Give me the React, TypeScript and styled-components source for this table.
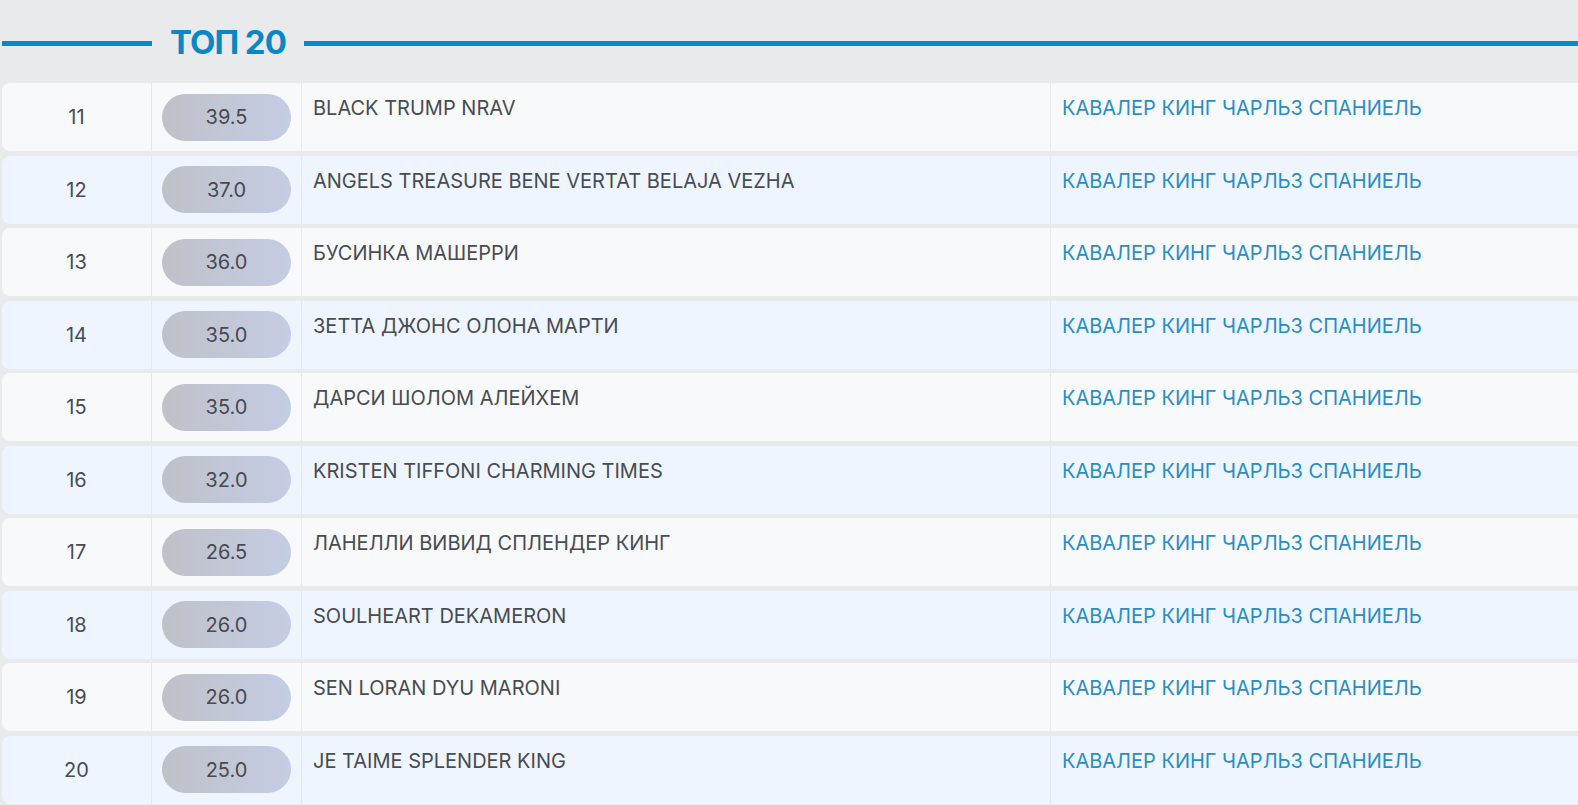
import React from 'react';
import styled, { createGlobalStyle } from 'styled-components';

const dogs = [
  { place: 11, score: '39.5', name: 'BLACK TRUMP NRAV' },
  { place: 12, score: '37.0', name: 'ANGELS TREASURE BENE VERTAT BELAJA VEZHA' },
  { place: 13, score: '36.0', name: 'БУСИНКА МАШЕРРИ' },
  { place: 14, score: '35.0', name: 'ЗЕТТА ДЖОНС ОЛОНА МАРТИ' },
  { place: 15, score: '35.0', name: 'ДАРСИ ШОЛОМ АЛЕЙХЕМ' },
  { place: 16, score: '32.0', name: 'KRISTEN TIFFONI CHARMING TIMES' },
  { place: 17, score: '26.5', name: 'ЛАНЕЛЛИ ВИВИД СПЛЕНДЕР КИНГ' },
  { place: 18, score: '26.0', name: 'SOULHEART DEKAMERON' },
  { place: 19, score: '26.0', name: 'SEN LORAN DYU MARONI' },
  { place: 20, score: '25.0', name: 'JE TAIME SPLENDER KING' },
];

const BREED = 'КАВАЛЕР КИНГ ЧАРЛЬЗ СПАНИЕЛЬ';

function App() {
  return (
    <Page>
      <GlobalStyle />
      <Header>
        <Line $short />
        <Title>ТОП 20</Title>
        <Line />
      </Header>
      <List>
        {dogs.map((dog, i) => (
          <Row key={dog.place} $even={i % 2 === 1}>
            <PlaceCell>{dog.place}</PlaceCell>
            <ScoreCell>
              <Pill>{dog.score}</Pill>
            </ScoreCell>
            <NameCell>{dog.name}</NameCell>
            <BreedCell>{BREED}</BreedCell>
          </Row>
        ))}
      </List>
    </Page>
  );
}

export default App;

const Page = styled.main`
  width: 100%;
  min-height: 100vh;
  padding: 0 0 0 2px;
  overflow: hidden;
`;

const Header = styled.header`
  display: flex;
  align-items: center;
  height: 83px;
  padding-top: 4px;
`;

const Line = styled.div<{ $short?: boolean }>`
  height: 5px;
  background-color: #0a88cb;
  ${(p) => (p.$short ? 'width: 150px; flex-shrink: 0;' : 'flex: 1;')}
`;

const Title = styled.h2`
  margin: -2px 18px 0;
  font-size: 33px;
  font-weight: 700;
  color: #0b87c7;
  line-height: 1;
  letter-spacing: -1px;
`;

const List = styled.div`
  display: flex;
  flex-direction: column;
  gap: 4.5px;
`;

const Row = styled.div<{ $even: boolean }>`
  display: grid;
  grid-template-columns: 150px 150px 749px 1fr;
  height: 68px;
  border-radius: 8px 0 0 8px;
  background-color: ${(p) => (p.$even ? '#eef5fe' : '#f8f9fb')};
  color: #484c53;
  font-size: 20px;
`;

const Cell = styled.div`
  border-right: 1px solid #e5e8ec;
`;

const PlaceCell = styled(Cell)`
  display: flex;
  align-items: center;
  justify-content: center;
`;

const ScoreCell = styled(Cell)`
  display: flex;
  align-items: center;
  justify-content: center;
`;

const Pill = styled.div`
  width: 129px;
  height: 47px;
  border-radius: 24px;
  background: linear-gradient(90deg, #bfc1c8 0%, #c5cde4 100%);
  display: flex;
  align-items: center;
  justify-content: center;
  color: #464a52;
`;

const NameCell = styled(Cell)`
  padding: 13px 11px 0;
`;

const BreedCell = styled.div`
  padding: 13px 11px 0;
  color: #2a8ec4;
`;

const GlobalStyle = createGlobalStyle`
*,
*::before,
*::after {
  margin: 0;
  padding: 0;
  box-sizing: border-box;
}
body {
  margin: 0;
  background-color: #e9eaec;
  font-family: Inter, "Noto Sans", Roboto, sans-serif;
}
`;
